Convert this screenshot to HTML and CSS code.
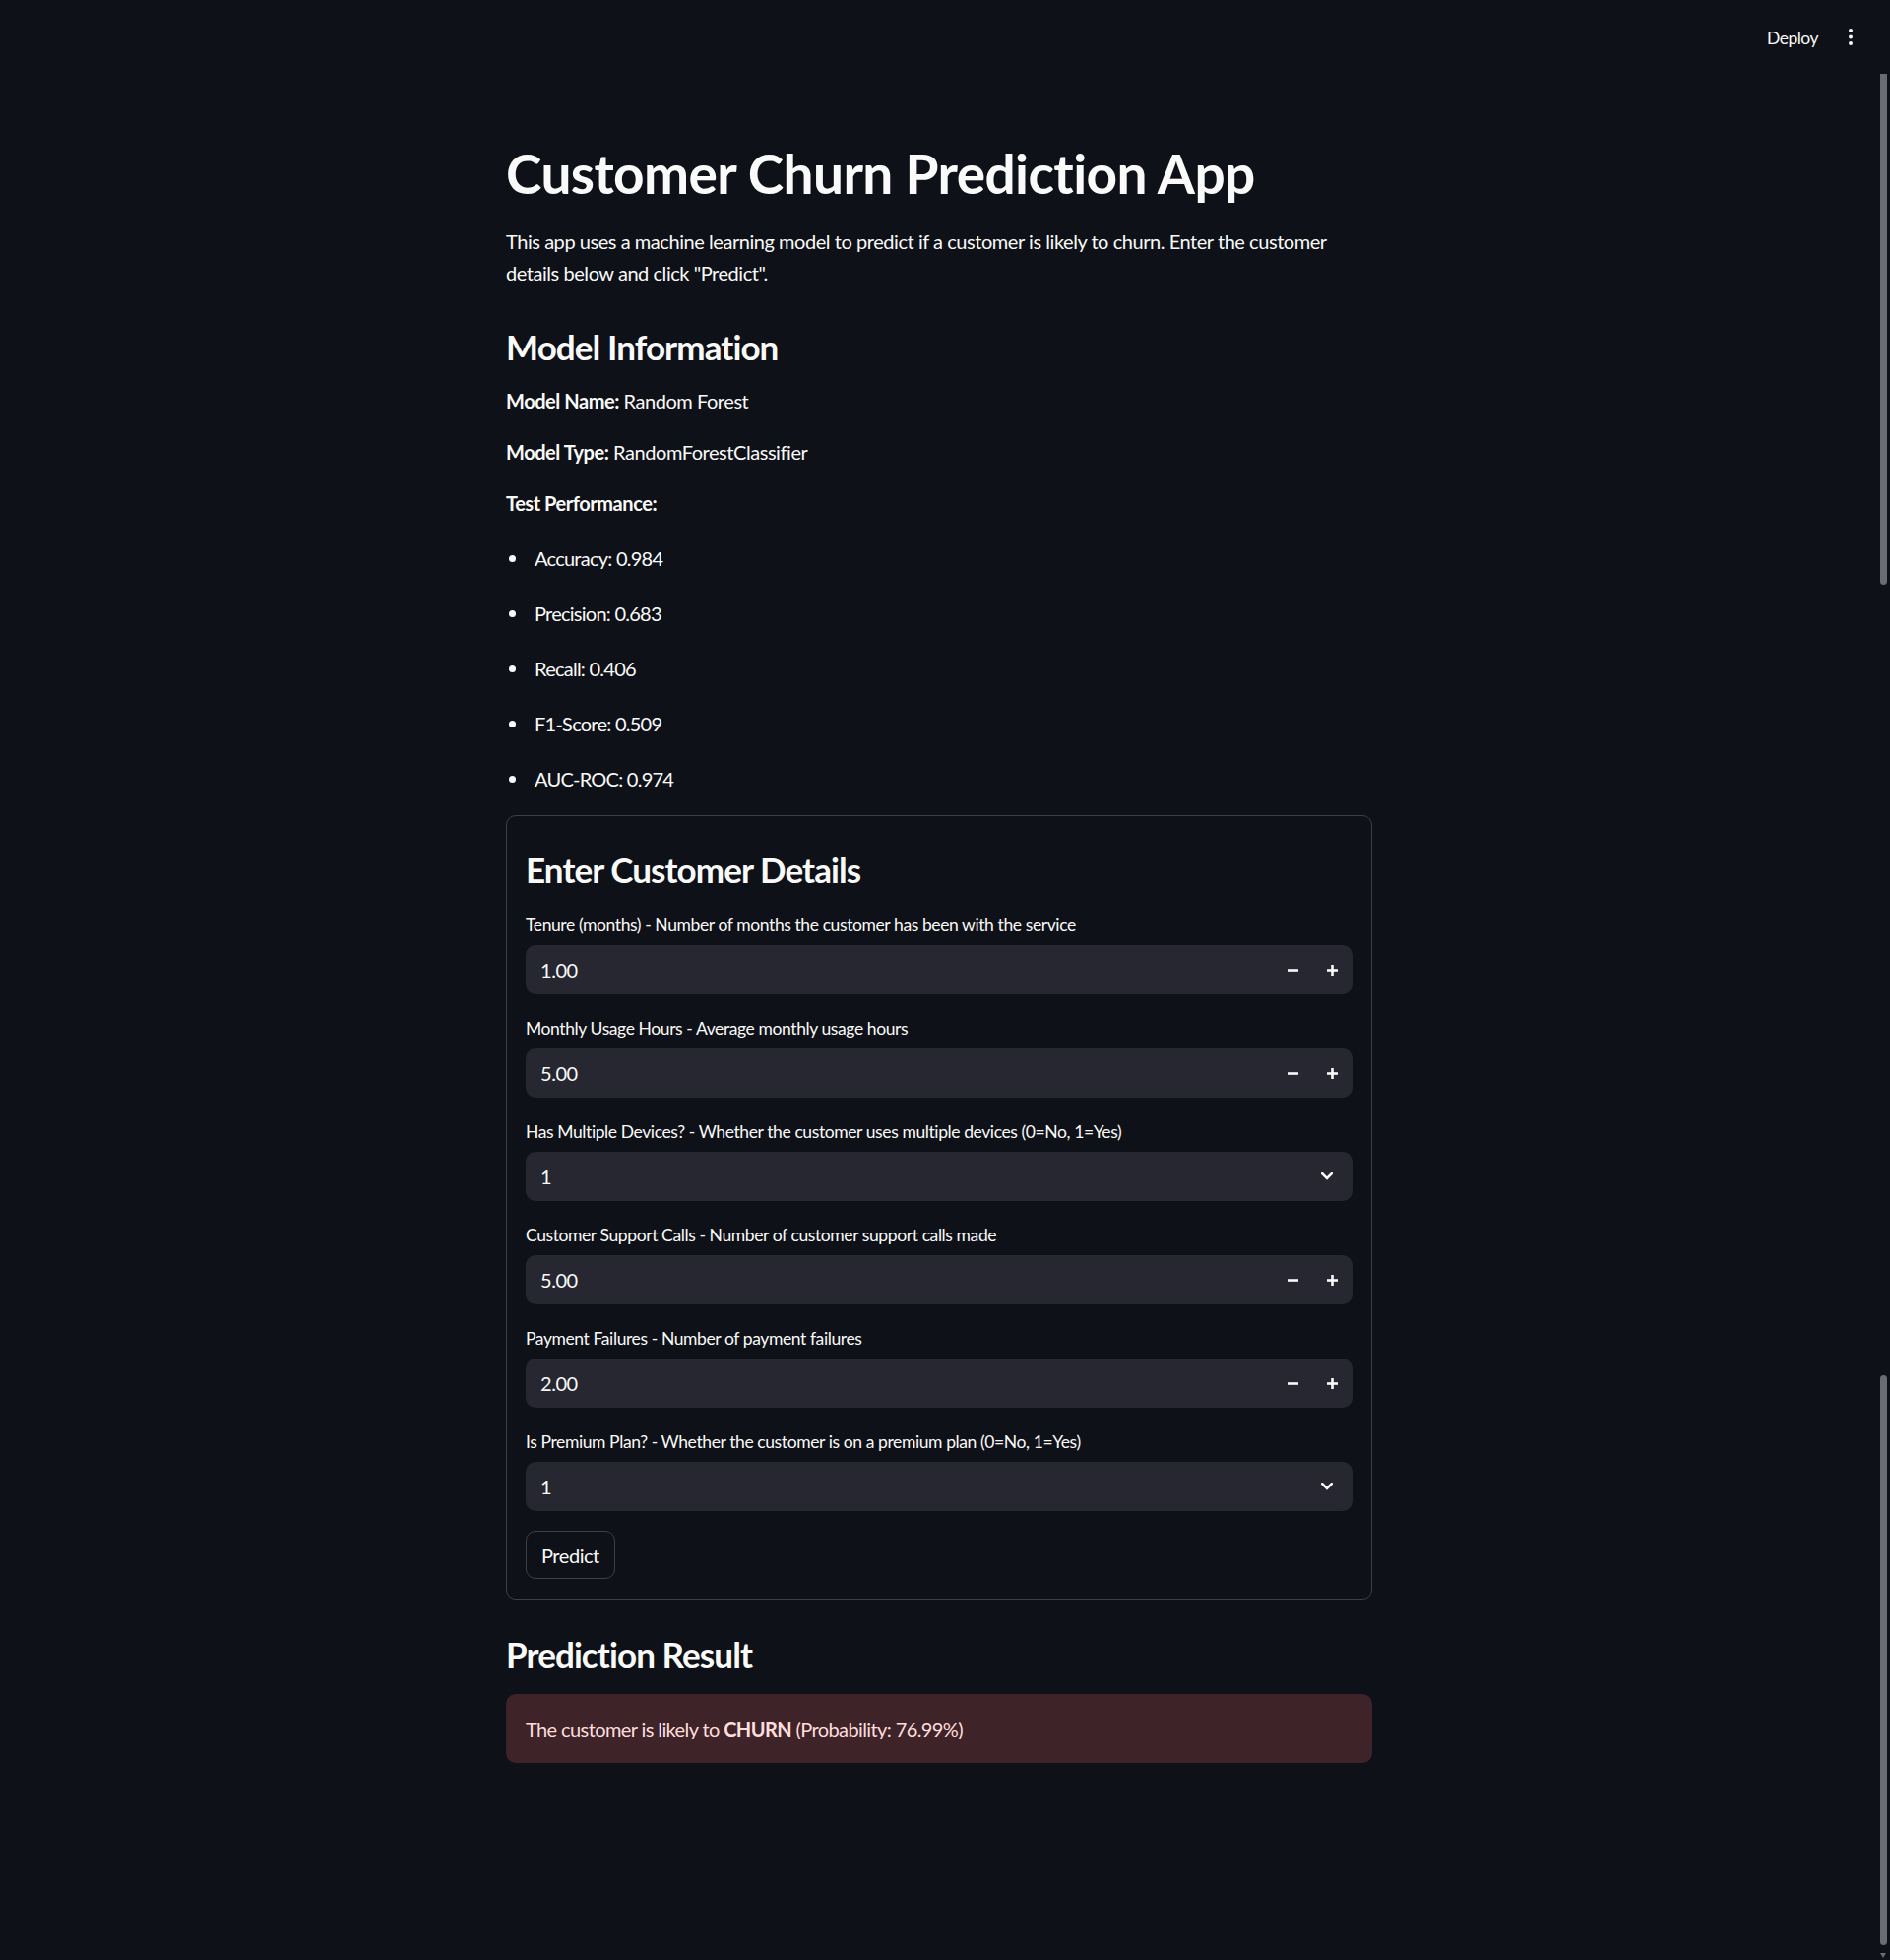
FILE: index.html
```html
<!DOCTYPE html>
<html lang="en">
<head>
<meta charset="utf-8">
<title>Customer Churn Prediction App</title>
<link rel="stylesheet" href="styles.css">
</head>
<body>
<header class="topbar">
  <button class="deploy">Deploy</button>
  <span class="menu" aria-label="Main menu">
    <svg width="4" height="17" viewBox="0 0 4 17"><circle cx="2" cy="2" r="2" fill="#fafafa"/><circle cx="2" cy="8.5" r="2" fill="#fafafa"/><circle cx="2" cy="15" r="2" fill="#fafafa"/></svg>
  </span>
</header>

<div class="app">
  <main class="block">
    <h1 class="title">Customer Churn Prediction App</h1>
    <p class="intro">This app uses a machine learning model to predict if a customer is likely to churn. Enter the customer details below and click "Predict".</p>

    <h3 class="sub sub-model">Model Information</h3>
    <p class="info first"><strong>Model Name:</strong> Random Forest</p>
    <p class="info"><strong>Model Type:</strong> RandomForestClassifier</p>
    <p class="info"><strong>Test Performance:</strong></p>
    <ul class="metrics">
      <li><span class="dot"></span>Accuracy: 0.984</li>
      <li><span class="dot"></span>Precision: 0.683</li>
      <li><span class="dot"></span>Recall: 0.406</li>
      <li><span class="dot"></span>F1-Score: 0.509</li>
      <li><span class="dot"></span>AUC-ROC: 0.974</li>
    </ul>

    <form class="form">
      <h3 class="sub sub-form">Enter Customer Details</h3>

      <div class="widget">
        <div class="label">Tenure (months) - Number of months the customer has been with the service</div>
        <div class="field">
          <span class="value">1.00</span>
          <span class="step"><svg width="11" height="11" viewBox="0 0 11 11"><line x1="0" y1="5.5" x2="11" y2="5.5" stroke="#fafafa" stroke-width="2.6"/></svg></span>
          <span class="step"><svg width="11" height="11" viewBox="0 0 11 11"><line x1="0" y1="5.5" x2="11" y2="5.5" stroke="#fafafa" stroke-width="2.6"/><line x1="5.5" y1="0" x2="5.5" y2="11" stroke="#fafafa" stroke-width="2.6"/></svg></span>
        </div>
      </div>

      <div class="widget">
        <div class="label">Monthly Usage Hours - Average monthly usage hours</div>
        <div class="field">
          <span class="value">5.00</span>
          <span class="step"><svg width="11" height="11" viewBox="0 0 11 11"><line x1="0" y1="5.5" x2="11" y2="5.5" stroke="#fafafa" stroke-width="2.6"/></svg></span>
          <span class="step"><svg width="11" height="11" viewBox="0 0 11 11"><line x1="0" y1="5.5" x2="11" y2="5.5" stroke="#fafafa" stroke-width="2.6"/><line x1="5.5" y1="0" x2="5.5" y2="11" stroke="#fafafa" stroke-width="2.6"/></svg></span>
        </div>
      </div>

      <div class="widget">
        <div class="label">Has Multiple Devices? - Whether the customer uses multiple devices (0=No, 1=Yes)</div>
        <div class="field select">
          <span class="value">1</span>
          <span class="chev"><svg width="12" height="8" viewBox="0 0 12 8"><polyline points="1.2,1.2 6,6 10.8,1.2" fill="none" stroke="#fafafa" stroke-width="2.6" stroke-linecap="square"/></svg></span>
        </div>
      </div>

      <div class="widget">
        <div class="label">Customer Support Calls - Number of customer support calls made</div>
        <div class="field">
          <span class="value">5.00</span>
          <span class="step"><svg width="11" height="11" viewBox="0 0 11 11"><line x1="0" y1="5.5" x2="11" y2="5.5" stroke="#fafafa" stroke-width="2.6"/></svg></span>
          <span class="step"><svg width="11" height="11" viewBox="0 0 11 11"><line x1="0" y1="5.5" x2="11" y2="5.5" stroke="#fafafa" stroke-width="2.6"/><line x1="5.5" y1="0" x2="5.5" y2="11" stroke="#fafafa" stroke-width="2.6"/></svg></span>
        </div>
      </div>

      <div class="widget">
        <div class="label">Payment Failures - Number of payment failures</div>
        <div class="field">
          <span class="value">2.00</span>
          <span class="step"><svg width="11" height="11" viewBox="0 0 11 11"><line x1="0" y1="5.5" x2="11" y2="5.5" stroke="#fafafa" stroke-width="2.6"/></svg></span>
          <span class="step"><svg width="11" height="11" viewBox="0 0 11 11"><line x1="0" y1="5.5" x2="11" y2="5.5" stroke="#fafafa" stroke-width="2.6"/><line x1="5.5" y1="0" x2="5.5" y2="11" stroke="#fafafa" stroke-width="2.6"/></svg></span>
        </div>
      </div>

      <div class="widget">
        <div class="label">Is Premium Plan? - Whether the customer is on a premium plan (0=No, 1=Yes)</div>
        <div class="field select">
          <span class="value">1</span>
          <span class="chev"><svg width="12" height="8" viewBox="0 0 12 8"><polyline points="1.2,1.2 6,6 10.8,1.2" fill="none" stroke="#fafafa" stroke-width="2.6" stroke-linecap="square"/></svg></span>
        </div>
      </div>

      <button type="button" class="predict">Predict</button>
    </form>

    <h3 class="sub sub-result">Prediction Result</h3>
    <div class="alert">The customer is likely to <strong>CHURN</strong> (Probability: 76.99%)</div>
  </main>
</div>

<div class="scroll-thumb thumb-top"></div>
<div class="scroll-thumb thumb-bottom"></div>
<div class="scroll-arrow"></div>
</body>
</html>
```

FILE: styles.css
```css
* {
  box-sizing: border-box;
}

html,
body {
  margin: 0;
  height: 100%;
  overflow: hidden;
  background: #0e1117;
  color: #fafafa;
  font-family: "Lato", "Noto Sans", sans-serif;
  font-size: 20px;
  letter-spacing: -0.45px;
}

body {
  position: relative;
}

.topbar {
  height: 75px;
  display: flex;
  justify-content: flex-end;
  align-items: center;
  padding-right: 38px;
}

.deploy {
  background: none;
  border: none;
  color: #fafafa;
  font-family: inherit;
  font-size: 17.5px;
  letter-spacing: -0.5px;
  padding: 0;
  margin-right: 31px;
  margin-top: 2px;
}

.menu {
  display: flex;
  align-items: center;
}

.menu svg {
  display: block;
}

.app {
  padding-right: 12px;
}

.block {
  width: 880px;
  margin: 0 auto;
}

.title {
  margin: 68px 0 0;
  font-size: 55px;
  line-height: 66px;
  font-weight: 700;
  letter-spacing: -0.6px;
}

.intro {
  margin: 20px 0 0;
  line-height: 32px;
}

.sub {
  margin: 0;
  font-size: 35px;
  line-height: 42px;
  font-weight: 700;
  letter-spacing: -0.9px;
}

.sub-model {
  margin-top: 38px;
}

.info {
  margin: 20px 0 0;
  line-height: 32px;
}

.info.first {
  margin-top: 18px;
}

.info strong {
  font-weight: 700;
}

.metrics {
  list-style: none;
  margin: 24px 0 0;
  padding: 0;
  display: flex;
  flex-direction: column;
  gap: 24px;
  letter-spacing: -0.75px;
}

.metrics li {
  display: flex;
  align-items: center;
  line-height: 32px;
}

.dot {
  width: 7px;
  height: 7px;
  border-radius: 50%;
  background: #fafafa;
  margin-left: 3px;
  margin-right: 19px;
}

.form {
  margin-top: 21px;
  border: 1px solid #3d4045;
  border-radius: 10px;
  padding: 33px 19px 20px;
  display: flex;
  flex-direction: column;
  align-items: stretch;
}

.sub-form {
  margin-bottom: 21px;
}

.widget {
  margin-bottom: 20px;
}

.label {
  height: 30px;
  line-height: 30px;
  font-size: 17.5px;
  letter-spacing: -0.4px;
  margin-bottom: 5px;
}

.field {
  height: 50px;
  background: #262730;
  border-radius: 10px;
  display: flex;
  align-items: center;
  padding-left: 15px;
}

.value {
  flex: 1;
  font-size: 20px;
}

.step {
  width: 40px;
  height: 50px;
  display: flex;
  align-items: center;
  justify-content: center;
}

.step:last-child {
  margin-right: 1px;
}

.step svg,
.chev svg {
  display: block;
}

.chev {
  width: 52px;
  display: flex;
  justify-content: center;
}

.predict {
  align-self: flex-start;
  height: 49px;
  padding: 0 15px;
  background: #0e1117;
  border: 1px solid #3d4045;
  border-radius: 10px;
  color: #fafafa;
  font-family: inherit;
  font-size: 20px;
  letter-spacing: -0.45px;
}

.sub-result {
  margin-top: 34px;
}

.alert {
  margin-top: 20px;
  background: #3e2328;
  border-radius: 10px;
  padding: 19px 20px;
  line-height: 32px;
  color: #ffdede;
  letter-spacing: -0.6px;
}

.alert strong {
  font-weight: 700;
}

.scroll-thumb {
  position: absolute;
  left: 1910px;
  width: 7px;
  background: #6b6c71;
  border-radius: 4px;
}

.thumb-top {
  top: 75px;
  height: 519px;
  border-radius: 0 0 4px 4px;
}

.thumb-bottom {
  top: 1397px;
  height: 579px;
}

.scroll-arrow {
  position: absolute;
  left: 1910px;
  top: 1984px;
  width: 0;
  height: 0;
  border-left: 3.5px solid transparent;
  border-right: 3.5px solid transparent;
  border-top: 5px solid #6b6c71;
}
```
